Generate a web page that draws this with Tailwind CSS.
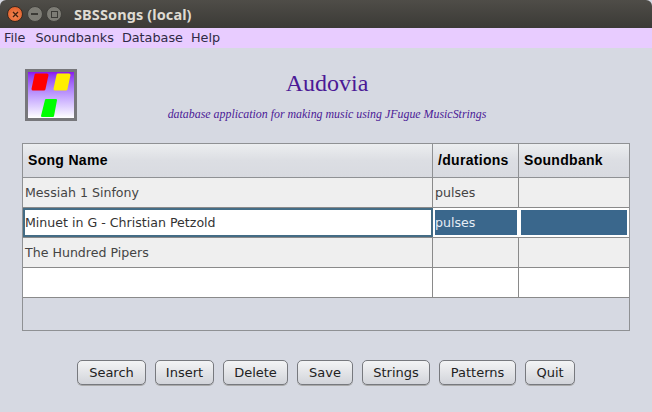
<!DOCTYPE html>
<html>
<head>
<meta charset="utf-8">
<script src="https://cdn.jsdelivr.net/npm/@tailwindcss/browser@4"></script>
</head>
<body class="m-0 w-[652px] h-[412px] overflow-hidden bg-[#d6d9e2] font-['Liberation_Sans',sans-serif]">
<div class="flex flex-col h-full">
  <header class="h-[28px] shrink-0 flex items-center bg-gradient-to-b from-[#4f4d48] to-[#3b3a36] rounded-t-[6px] pl-[7px]">
    <div class="flex items-center gap-[3.500px]">
      <div class="w-[16px] h-[16px] rounded-full bg-[radial-gradient(circle_at_50%_60%,#f58a55,#dd5520)] border border-[#3a2a20] flex items-center justify-center">
        <svg width="7" height="7" viewBox="0 0 7 7"><path d="M1 1L6 6M6 1L1 6" stroke="#41210f" stroke-width="1.3"/></svg>
      </div>
      <div class="w-[16px] h-[16px] rounded-full bg-[#7d7c75] border border-[#3f3e3a] flex items-center justify-center">
        <div class="w-[7px] h-[1.500px] bg-[#3b3a36]"></div>
      </div>
      <div class="w-[16px] h-[16px] rounded-full bg-[#7d7c75] border border-[#3f3e3a] flex items-center justify-center">
        <div class="w-[7px] h-[7px] border border-[#3b3a36]"></div>
      </div>
    </div>
    <span class="ml-[12px] text-[14.500px] font-bold text-[#dfdbd2] font-['Noto_Sans',sans-serif] leading-none tracking-[0.1px]">SBSSongs (local)</span>
  </header>
  <nav class="h-[20px] shrink-0 flex items-center bg-[#e8ccff] pl-[4px] gap-[8px] text-[12.800px] text-[#2f2a45] font-['DejaVu_Sans',sans-serif]">
    <span class="mr-[2px]">File</span><span>Soundbanks</span><span>Database</span><span>Help</span>
  </nav>
  <section class="h-[75px] shrink-0 flex pl-[25px] pt-[21px]">
    <div class="w-[52px] h-[52px] shrink-0 border-[3px] border-[#77777b] bg-gradient-to-b from-[#8a10f0] to-[#ffffff]">
      <svg width="46" height="46" viewBox="0 0 46 46">
        <path d="M8 3H19L16 17H5Z" fill="#ff0000" stroke="#ff0000" stroke-linejoin="round" stroke-width="3"/>
        <path d="M30 3H41L38 17H27Z" fill="#ffee00" stroke="#ffee00" stroke-linejoin="round" stroke-width="3"/>
        <path d="M18 28H28L25 44H14Z" fill="#00ff00" stroke="#00ff00" stroke-linejoin="round" stroke-width="2"/>
      </svg>
    </div>
    <div class="w-[500px] flex flex-col items-center font-['Liberation_Serif',serif] text-[#4b1a96]">
      <div class="text-[24px] leading-[28px]">Audovia</div>
      <div class="text-[11.900px] italic leading-[14px] mt-[10px]">database application for making music using JFugue MusicStrings</div>
    </div>
  </section>
  <main class="ml-[22px] w-[608px] h-[188px] mt-[20px] shrink-0 border border-[#8f9194] flex flex-col text-[12.600px] font-['DejaVu_Sans',sans-serif]">
    <div class="grid grid-cols-[410px_86px_1fr] h-[34px] shrink-0 bg-gradient-to-b from-[#eceef0] via-[#dcdee3] to-[#d8dae0] border-b border-[#8f9194] font-bold text-black text-[14px] tracking-[0.3px] leading-[32px] font-['Liberation_Sans',sans-serif]">
      <div class="pl-[5px] border-r border-[#8f9194]">Song Name</div>
      <div class="pl-[5px] border-r border-[#8f9194]">/durations</div>
      <div class="pl-[5px]">Soundbank</div>
    </div>
    <div class="grid grid-cols-[410px_86px_1fr] h-[30px] shrink-0 bg-[#efefef] border-b border-[#8a8a8a] text-[#444] leading-[29px]">
      <div class="pl-[2px] border-r border-[#8a8a8a]">Messiah 1 Sinfony</div>
      <div class="pl-[2px] border-r border-[#8a8a8a]">pulses</div>
      <div></div>
    </div>
    <div class="grid grid-cols-[410px_86px_1fr] h-[30px] shrink-0 bg-white border-b border-[#8a8a8a] leading-[25px]">
      <div class="border-2 border-[#446c85] text-[#333]">Minuet in G - Christian Petzold</div>
      <div class="border-2 border-white bg-[#3a678c] text-[#e6edf5]">pulses</div>
      <div class="border-2 border-white bg-[#3a678c]"></div>
    </div>
    <div class="grid grid-cols-[410px_86px_1fr] h-[30px] shrink-0 bg-[#efefef] border-b border-[#8a8a8a] text-[#444] leading-[29px]">
      <div class="pl-[2px] border-r border-[#8a8a8a]">The Hundred Pipers</div>
      <div class="border-r border-[#8a8a8a]"></div>
      <div></div>
    </div>
    <div class="grid grid-cols-[410px_86px_1fr] h-[30px] shrink-0 bg-white border-b border-[#8a8a8a]">
      <div class="border-r border-[#8a8a8a]"></div>
      <div class="border-r border-[#8a8a8a]"></div>
      <div></div>
    </div>
  </main>
  <footer class="mt-[29px] ml-[77px] flex gap-[9px] text-[13px] text-[#222] font-['DejaVu_Sans',sans-serif]">
    <div class="w-[69px] h-[25px] flex items-center justify-center rounded-[5px] border border-[#77797e] bg-gradient-to-b from-[#f3f4f5] to-[#d2d4da] shadow-[0_1px_0_#aaa]">Search</div>
    <div class="w-[59px] h-[25px] flex items-center justify-center rounded-[5px] border border-[#77797e] bg-gradient-to-b from-[#f3f4f5] to-[#d2d4da] shadow-[0_1px_0_#aaa]">Insert</div>
    <div class="w-[65px] h-[25px] flex items-center justify-center rounded-[5px] border border-[#77797e] bg-gradient-to-b from-[#f3f4f5] to-[#d2d4da] shadow-[0_1px_0_#aaa]">Delete</div>
    <div class="w-[56px] h-[25px] flex items-center justify-center rounded-[5px] border border-[#77797e] bg-gradient-to-b from-[#f3f4f5] to-[#d2d4da] shadow-[0_1px_0_#aaa]">Save</div>
    <div class="w-[68px] h-[25px] flex items-center justify-center rounded-[5px] border border-[#77797e] bg-gradient-to-b from-[#f3f4f5] to-[#d2d4da] shadow-[0_1px_0_#aaa]">Strings</div>
    <div class="w-[77px] h-[25px] flex items-center justify-center rounded-[5px] border border-[#77797e] bg-gradient-to-b from-[#f3f4f5] to-[#d2d4da] shadow-[0_1px_0_#aaa]">Patterns</div>
    <div class="w-[50px] h-[25px] flex items-center justify-center rounded-[5px] border border-[#77797e] bg-gradient-to-b from-[#f3f4f5] to-[#d2d4da] shadow-[0_1px_0_#aaa]">Quit</div>
  </footer>
</div>
</body>
</html>
